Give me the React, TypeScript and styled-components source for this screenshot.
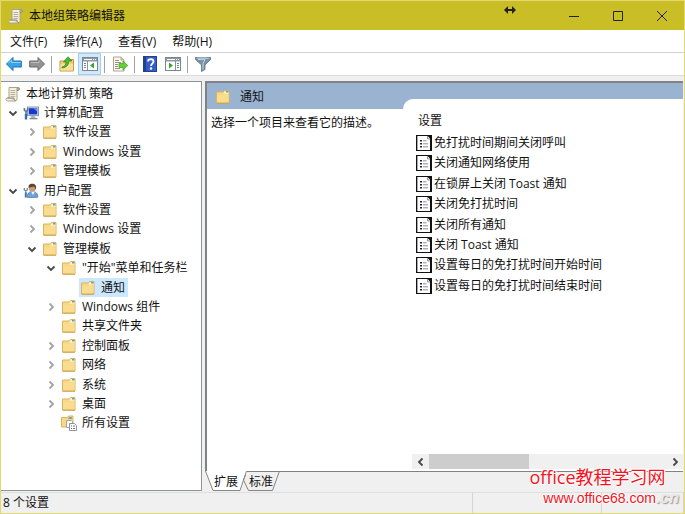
import React, { useState } from "react";
import styled, { createGlobalStyle, css } from "styled-components";

const GlobalStyle = createGlobalStyle`
  * { box-sizing: border-box; }
  body { margin: 0; background: #f0f0f0; }
  body, button { font: 12px/16px "Open Sans", "Noto Sans CJK SC", sans-serif; color: #111; }
  button { padding: 0; border: 0; background: none; white-space: nowrap; }
  ul { margin: 0; padding: 0; list-style: none; }
  svg { display: block; flex: none; }
`;

const Window = styled.div`
  min-height: 100vh;
  display: flex;
  flex-direction: column;
  border: 1px solid #e3d96c;
  background: #f0f0f0;
`;

const TitleBar = styled.header`
  height: 29px;
  display: flex;
  align-items: center;
  padding-left: 7px;
  background: #cabe27;
`;

const Title = styled.h1`
  flex: 1;
  margin: 0;
  padding-left: 5px;
  font-size: 12px;
  font-weight: 400;
`;

const ResizeMark = styled.span`
  align-self: flex-start;
  padding-top: 4px;
  margin-right: 36px;
`;

const CaptionButton = styled.button`
  width: 44px;
  height: 28px;
  display: grid;
  place-items: center;
`;

const MenuBar = styled.nav`
  height: 23px;
  display: flex;
  align-items: center;
  gap: 16px;
  padding: 2px 0 0 9px;
  background: #fff;
  border-bottom: 1px solid #d2d2d2;
`;

const ToolBar = styled.div`
  height: 23px;
  display: flex;
  align-items: center;
  padding-left: 1px;
  background: #fff;
  border-bottom: 1px solid #dcdcdc;
`;

const ToolButton = styled.button<{ $on?: boolean }>`
  width: 23px;
  height: 22px;
  display: grid;
  place-items: center;
  border: 1px solid ${(p) => (p.$on ? "#9fd1f7" : "transparent")};
  background: ${(p) => (p.$on ? "#cfe8fb" : "transparent")};
`;

const Divider = styled.span`
  width: 1px;
  height: 17px;
  margin: 0 3px;
  background: #a2a2a2;
`;

const Workspace = styled.main`
  flex: 1;
  display: grid;
  grid-template-columns: 201px minmax(0, 1fr);
  gap: 3px;
  padding-top: 5px;
`;

const TreePane = styled.section`
  padding: 2px 0 0 3px;
  background: #fff;
  border: solid #8f949c;
  border-width: 1px 1px 1px 0;
`;

const TreeList = styled.ul`
  height: 349px;
  display: grid;
  grid-auto-rows: 1fr;
`;

const TreeRow = styled.li<{ $level: number }>`
  display: flex;
  align-items: stretch;
  padding-left: ${(p) => Math.max(0, p.$level - 1) * 19}px;
`;

const Toggle = styled.button`
  width: 18px;
  display: grid;
  place-items: center;
`;

const NodeButton = styled.button<{ $selected?: boolean }>`
  display: flex;
  align-items: center;
  gap: 5px;
  padding: 0 3px 0 1px;
  ${(p) => p.$selected && css`background: #cce8ff;`}
`;

const DetailPane = styled.section`
  display: flex;
  flex-direction: column;
  min-width: 0;
  padding-right: 1px;
`;

const DetailFrame = styled.div`
  flex: 1;
  display: grid;
  grid-template-columns: 196px minmax(0, 1fr);
  border: solid #808285;
  border-width: 2px 0 1px 2px;
  background: #fff;
`;

const Description = styled.div`
  display: flex;
  flex-direction: column;
`;

const DetailHeading = styled.h2`
  height: 26px;
  margin: 0;
  padding: 1px 0 0 8px;
  display: flex;
  align-items: center;
  gap: 9px;
  font-size: 12px;
  font-weight: 400;
  background: #9ab3d1;
`;

const Hint = styled.p`
  margin: 0;
  padding: 6px 0 0 4px;
  white-space: nowrap;
`;

const SettingsColumn = styled.div`
  display: flex;
  padding-top: 16px;
  background: #9ab3d1;
`;

const SettingsSheet = styled.div`
  flex: 1;
  min-width: 0;
  display: flex;
  flex-direction: column;
  background: #fff;
  border-top-left-radius: 10px;
`;

const ColumnTitle = styled.h3`
  margin: 0;
  padding: 14px 0 6px 15px;
  font-size: 12px;
  font-weight: 400;
`;

const SettingsList = styled.ul`
  height: 163px;
  display: grid;
  grid-auto-rows: 1fr;
  padding-left: 13px;
`;

const SettingButton = styled.button`
  display: flex;
  align-items: center;
  gap: 2px;
`;

const ScrollBar = styled.div`
  height: 15px;
  margin: auto 0 2px 9px;
  display: grid;
  grid-template-columns: 17px 1fr 17px;
  background: #f0f0f0;
`;

const ScrollArrow = styled.button`
  display: grid;
  place-items: center;
`;

const ScrollThumb = styled.div`
  width: 42%;
  background: #cdcdcd;
`;

const TabStrip = styled.div`
  height: 19px;
  display: flex;
`;

const Tab = styled.button<{ $second?: boolean }>`
  position: relative;
  width: ${(p) => (p.$second ? 38 : 42)}px;
  height: 19px;
  margin-left: ${(p) => (p.$second ? -5 : 0)}px;
  isolation: isolate;
`;

const TabShape = styled.svg`
  position: absolute;
  inset: 0;
  top: -1px;
  z-index: -1;
`;

const StatusBar = styled.footer`
  height: 22px;
  display: grid;
  grid-template-columns: minmax(0, 1fr) 129px 82px;
  padding-top: 1px;
`;

const StatusCell = styled.div`
  padding: 2px 0 0 2px;
  border-top: 1px solid #dfdfdf;
  border-right: 1px solid #d5d5d5;
`;

const SiteMark = styled.aside`
  position: absolute;
  right: 6px;
  bottom: 7px;
  width: 150px;
  text-align: center;
  color: #f5121d;
  text-shadow: -1px 0 #fff, 1px 0 #fff, 0 -1px #fff, 0 1px #fff;
`;

const SiteName = styled.div`
  font-size: 18px;
  line-height: 24px;
  padding-right: 13px;
  white-space: nowrap;
`;

const SiteAddress = styled.div`
  display: flex;
  justify-content: flex-end;
  align-items: baseline;
  font: 14px/18px "Liberation Sans", sans-serif;
`;

const DomainTail = styled.span`
  font: italic bold 16px/18px "Liberation Sans", sans-serif;
  color: #e9e9e9;
  text-shadow: 1px 1px 1px #999;
`;

const Flourish = styled.svg`
  position: absolute;
  z-index: -1;
  right: 64px;
  bottom: -2px;
`;

const FolderIcon = () => (
  <svg width="16" height="16" viewBox="0 0 16 16">
    <path d="M1.500 3h7l1-1.500h4.500v12.500H1.500z" fill="#f8d887" stroke="#d9b45d" strokeWidth="1" />
    <path d="M9.500 2.200h4v2.600h-5z" fill="#fff3c9" />
    <rect x="11" y="2" width="2.500" height="1.500" fill="#5aa4c8" />
    <path d="M2 6h7l1.400-1.200H13.600V13.500H2z" fill="#fadc90" />
    <path d="M1.500 14.200h12.500" stroke="#caa04c" />
  </svg>
);

const ScrollIcon = () => (
  <svg width="16" height="16" viewBox="0 0 16 16">
    <path d="M4 1.500h9.500c1.500 0 1.500 3 0 3H12v8.200c0 1.600-.8 2.300-2 2.300H2.300c-1.800 0-1.800-3 0-3H4z" fill="#f5f1df" stroke="#a8a28f" />
    <path d="M12 4.500V3c0-2 2.500-1.500 2.300 0 0 1-.8 1.500-2.300 1.500M2.300 12H9c.1 2 .6 3 2 2.500" fill="#cfc8b2" stroke="#8d8979" />
    <path d="M5.500 4.500h4.800M5.500 6.500h4.800M5.500 8.500h4.800M5.500 10.400h4.800" stroke="#b5ae98" />
  </svg>
);

const ComputerIcon = () => (
  <svg width="16" height="16" viewBox="0 0 16 16">
    <rect x="4.500" y="2" width="11" height="8.600" fill="#d5dce4" stroke="#8997a9" />
    <rect x="5.800" y="3.200" width="8.400" height="6.200" fill="#1936cf" />
    <path d="M10 3.200h4.200v3.200z" fill="#6e8df0" />
    <path d="M8.500 11h3l1 2h-5z" fill="#a9b5c3" />
    <path d="M6.500 13.600h8" stroke="#7e8b99" strokeWidth="1.400" />
    <path d="M1.400 3v2.400l1.600 1 1.600-1V3M3 6v8" fill="none" stroke="#5f7690" strokeWidth="1.600" />
    <path d="M3 9v5.500" stroke="#2e6fb0" strokeWidth="2.400" />
  </svg>
);

const UserIcon = () => (
  <svg width="16" height="16" viewBox="0 0 16 16">
    <path d="M4.500 14.500c-.5-4 1.500-6 5-6s5.500 2.500 5.200 5.800z" fill="#6fa3d8" stroke="#4779ad" strokeWidth=".8" />
    <path d="M8 8.500l2 3.500 2-3.500z" fill="#f4f7fb" />
    <circle cx="9.300" cy="5" r="3.500" fill="#c99a74" />
    <path d="M5.800 5C5 2 7 .7 9.500.8c3 0 4.300 2.300 3.200 5.700-.8-.6-1-2-1.300-2.900-1.700.6-3.800.4-5.600 1.400z" fill="#5d4536" />
    <path d="M1.300 5v2l1.500 1 1.500-1V5M2.800 8v3" fill="none" stroke="#71889d" strokeWidth="1.300" />
    <path d="M2.800 9.500v5" stroke="#3677b5" strokeWidth="2" />
  </svg>
);

const AllSettingsIcon = () => (
  <svg width="16" height="16" viewBox="0 0 16 16">
    <path d="M.5 2.500h6L7.500 1h4.500v11H.5z" fill="#f8d887" stroke="#d9b45d" />
    <path d="M8 2h3v2H7z" fill="#6eabc3" />
    <path d="M5.500 5.500h5l1 1v6h-6z" fill="#fff" stroke="#a2a2a2" />
    <path d="M8.500 8.500h5l2 2v5h-7z" fill="#fff" stroke="#919191" />
    <path d="M10 11h1m1 0h2m-4 2.500h1m1 0h2" stroke="#6d7390" />
  </svg>
);

const SettingIcon = () => (
  <svg width="16" height="16" viewBox="0 0 16 16">
    <path d="M0 0h16v16H0z" fill="#111" />
    <path d="M1 1h10.500L14 3.500V15H1z" fill="#fff" />
    <path d="M1.500 1v14" stroke="#aaa" />
    <path d="M11.500 1v3H14" fill="#ddd" stroke="#777" strokeWidth=".7" />
    <path d="M4 5h2v1.500H4zm0 3h2v1.500H4zm0 3h2v1.500H4z" fill="#24242c" />
    <path d="M7 5.800h3.500M7 8.800h5M7 11.800h5" stroke="#8b8ba5" />
  </svg>
);

const ArrowIcon = ({ forward }: { forward?: boolean }) => (
  <svg width="16" height="16" viewBox="0 0 16 16">
    <path
      d={forward ? "M15.500 8 9 1.500V5H.7v6H9v3.500z" : "M.5 8 7 1.500V5h8.300v6H7v3.500z"}
      fill={forward ? "#949494" : "#38a3e5"}
      stroke={forward ? "#686868" : "#1c71b5"}
    />
    <path d={forward ? "M1.500 6.500h8.500V4.500" : "M2.500 7l3-2.800V6.500h9"} fill="none" stroke={forward ? "#bcbcbc" : "#8bd7fa"} />
  </svg>
);

const UpFolderIcon = () => (
  <svg width="16" height="16" viewBox="0 0 16 16">
    <path d="M1 5h5l1-1.500h7.500V15H1z" fill="#f3cf7c" stroke="#c49a46" />
    <path d="M1.500 8h12.600v6.500H1.500z" fill="#fbdf9a" />
    <path d="M3 11c3-.5 4-2.500 4-5H4.500L9 .8 13 5H9.800c0 4-2.200 6.500-6.800 7z" fill="#4dbb2c" stroke="#258a18" strokeWidth=".7" />
  </svg>
);

const PaneIcon = ({ right }: { right?: boolean }) => (
  <svg width="16" height="16" viewBox="0 0 16 16">
    <rect x=".5" y="1.500" width="15" height="13" fill="#fff" stroke="#7d858d" />
    <path d="M1 2h14v3.500H1z" fill="#8f9aa5" />
    <path d="M2 3.500h8m1 0h1m1 0h1" stroke="#fff" />
    <path d={right ? "M10.500 5v9" : "M5.500 5v9"} stroke="#8a929a" />
    <path d={right ? "M12 7.500h2M12 9.500h2M12 11.500h2" : "M2 7.500h2M2 9.500h2M2 11.500h2"} stroke="#6187b3" />
    <path d={right ? "M4 6.500v6l4-3z" : "M12 6.500v6l-4-3z"} fill="#35a42b" />
  </svg>
);

const ExportIcon = () => (
  <svg width="16" height="16" viewBox="0 0 16 16">
    <path d="M1.500 1h7.500l3 3v11H1.500z" fill="#fffbe7" stroke="#aaa58f" />
    <path d="M9 1v3h3" fill="#ddd5b8" stroke="#aaa58f" />
    <path d="M3 4.500h4M3 6.500h6M3 8.500h3M3 10.500h3M3 12.500h5" stroke="#9590a0" />
    <path d="M7 7.500h4V5l4.800 4.500L11 14v-2.500H7z" fill="#65cf39" stroke="#35a124" strokeWidth=".7" />
  </svg>
);

const HelpIcon = () => (
  <svg width="16" height="16" viewBox="0 0 16 16">
    <rect x="1.500" y=".5" width="13" height="15" fill="#345dc5" stroke="#23408e" />
    <path d="M3 1v14" stroke="#18397f" strokeWidth="1.500" />
    <path d="M6 5.500c0-3 5.500-3 5.500 0 0 2-2.500 2.200-2.500 4.500" fill="none" stroke="#fff" strokeWidth="1.800" />
    <circle cx="9" cy="12.500" r="1.200" fill="#fff" />
  </svg>
);

const FilterIcon = () => (
  <svg width="16" height="16" viewBox="0 0 16 16">
    <path d="M.5 1.500h15v2L10 9v4.500l-3.500 2V9L.5 3.500z" fill="#7892a7" stroke="#587187" strokeWidth=".8" />
    <path d="M3 3.500h7L8 7.500v6" fill="none" stroke="#c5d7e3" />
    <ellipse cx="8" cy="2.300" rx="6.500" ry="1.100" fill="#a9bfce" />
  </svg>
);

type ChevronDirection = "left" | "right" | "down";
const chevrons: Record<ChevronDirection, string> = {
  left: "M6.500 1.500 3 5l3.500 3.500",
  right: "M3.500 1.500 7 5 3.500 8.500",
  down: "M1.500 3.500 5 7l3.500-3.500",
};
const Chevron = ({ to, strong }: { to: ChevronDirection; strong?: boolean }) => (
  <svg width="10" height="10" viewBox="0 0 10 10">
    <path d={chevrons[to]} fill="none" stroke={strong ? "#484848" : "#a3a3a3"} strokeWidth="1.800" />
  </svg>
);

type Node = { label: string; level: number; icon?: React.FC; open?: boolean };

const nodes: Node[] = [
  { label: "本地计算机 策略", level: 0, icon: ScrollIcon },
  { label: "计算机配置", level: 1, icon: ComputerIcon, open: true },
  { label: "软件设置", level: 2, open: false },
  { label: "Windows 设置", level: 2, open: false },
  { label: "管理模板", level: 2, open: false },
  { label: "用户配置", level: 1, icon: UserIcon, open: true },
  { label: "软件设置", level: 2, open: false },
  { label: "Windows 设置", level: 2, open: false },
  { label: "管理模板", level: 2, open: true },
  { label: "\"开始\"菜单和任务栏", level: 3, open: true },
  { label: "通知", level: 4 },
  { label: "Windows 组件", level: 3, open: false },
  { label: "共享文件夹", level: 3 },
  { label: "控制面板", level: 3, open: false },
  { label: "网络", level: 3, open: false },
  { label: "系统", level: 3, open: false },
  { label: "桌面", level: 3, open: false },
  { label: "所有设置", level: 3, icon: AllSettingsIcon },
];

const settings = [
  "免打扰时间期间关闭呼叫",
  "关闭通知网络使用",
  "在锁屏上关闭 Toast 通知",
  "关闭免打扰时间",
  "关闭所有通知",
  "关闭 Toast 通知",
  "设置每日的免打扰时间开始时间",
  "设置每日的免打扰时间结束时间",
];

export default function App() {
  const [selected, setSelected] = useState(10);

  return (
    <>
      <GlobalStyle />
      <Window>
        <TitleBar>
          <ScrollIcon />
          <Title>本地组策略编辑器</Title>
          <ResizeMark>
            <svg width="12" height="10" viewBox="0 0 12 10">
              <path d="M0 5l4-4v3h4V1l4 4-4 4V6H4v3z" fill="#222" />
            </svg>
          </ResizeMark>
          <CaptionButton aria-label="最小化">
            <svg width="12" height="12" viewBox="0 0 12 12"><path d="M1 6.500h10" stroke="#222" /></svg>
          </CaptionButton>
          <CaptionButton aria-label="最大化">
            <svg width="12" height="12" viewBox="0 0 12 12"><path d="M1.500 1.500h9v9h-9z" fill="none" stroke="#222" /></svg>
          </CaptionButton>
          <CaptionButton aria-label="关闭">
            <svg width="12" height="12" viewBox="0 0 12 12"><path d="M1 1l10 10M11 1 1 11" stroke="#222" /></svg>
          </CaptionButton>
        </TitleBar>

        <MenuBar>
          {["文件(F)", "操作(A)", "查看(V)", "帮助(H)"].map((item) => (
            <button key={item}>{item}</button>
          ))}
        </MenuBar>

        <ToolBar role="toolbar">
          <ToolButton aria-label="后退"><ArrowIcon /></ToolButton>
          <ToolButton aria-label="前进"><ArrowIcon forward /></ToolButton>
          <Divider />
          <ToolButton aria-label="上移一级"><UpFolderIcon /></ToolButton>
          <ToolButton aria-label="显示控制台树" $on><PaneIcon /></ToolButton>
          <Divider />
          <ToolButton aria-label="导出列表"><ExportIcon /></ToolButton>
          <Divider />
          <ToolButton aria-label="帮助"><HelpIcon /></ToolButton>
          <ToolButton aria-label="显示操作窗格"><PaneIcon right /></ToolButton>
          <Divider />
          <ToolButton aria-label="筛选器"><FilterIcon /></ToolButton>
        </ToolBar>

        <Workspace>
          <TreePane>
            <TreeList role="tree">
              {nodes.map(({ label, level, icon: Icon = FolderIcon, open }, index) => (
                <TreeRow key={index} $level={level} role="treeitem" aria-expanded={open}>
                  {level > 0 && (
                    <Toggle as={open === undefined ? "span" : "button"}>
                      {open !== undefined && <Chevron to={open ? "down" : "right"} strong={open} />}
                    </Toggle>
                  )}
                  <NodeButton $selected={index === selected} onClick={() => setSelected(index)}>
                    <Icon />
                    {label}
                  </NodeButton>
                </TreeRow>
              ))}
            </TreeList>
          </TreePane>

          <DetailPane>
            <DetailFrame>
              <Description>
                <DetailHeading><FolderIcon />通知</DetailHeading>
                <Hint>选择一个项目来查看它的描述。</Hint>
              </Description>
              <SettingsColumn>
                <SettingsSheet>
                  <ColumnTitle>设置</ColumnTitle>
                  <SettingsList>
                    {settings.map((name) => (
                      <li key={name}>
                        <SettingButton><SettingIcon />{name}</SettingButton>
                      </li>
                    ))}
                  </SettingsList>
                  <ScrollBar>
                    <ScrollArrow aria-label="向左滚动"><Chevron to="left" strong /></ScrollArrow>
                    <ScrollThumb />
                    <ScrollArrow aria-label="向右滚动"><Chevron to="right" strong /></ScrollArrow>
                  </ScrollBar>
                </SettingsSheet>
              </SettingsColumn>
            </DetailFrame>
            <TabStrip role="tablist">
              <Tab role="tab" aria-selected>
                <TabShape width="42" height="20" viewBox="0 0 42 20">
                  <path d="M0 0h42l-7 19.500H8z" fill="#fff" />
                  <path d="M.5 0 8 19.500h27L41.500 0" fill="none" stroke="#858585" />
                </TabShape>
                扩展
              </Tab>
              <Tab role="tab" aria-selected={false} $second>
                <TabShape width="38" height="20" viewBox="0 0 38 20">
                  <path d="M3.500 4 1.500 9l5 10.500h24L37.500 0" fill="none" stroke="#858585" />
                </TabShape>
                标准
              </Tab>
            </TabStrip>
          </DetailPane>
        </Workspace>

        <StatusBar>
          <StatusCell>8 个设置</StatusCell>
          <StatusCell />
          <StatusCell />
        </StatusBar>
      </Window>

      <SiteMark>
        <Flourish width="20" height="26" viewBox="0 0 20 26" aria-hidden>
          <path d="M5 5c3-4 5 2 10-2M12 6c-1 8-2 16-8 18" fill="none" stroke="#b5b5b5" strokeWidth="2" />
          <path d="M5 4c3-4 5 2 10-2M11 5c-1 8-2 16-8 18" fill="none" stroke="#fafafa" strokeWidth="1.500" />
        </Flourish>
        <SiteName>office教程学习网</SiteName>
        <SiteAddress>www.office68.com<DomainTail>.cn</DomainTail></SiteAddress>
      </SiteMark>
    </>
  );
}
